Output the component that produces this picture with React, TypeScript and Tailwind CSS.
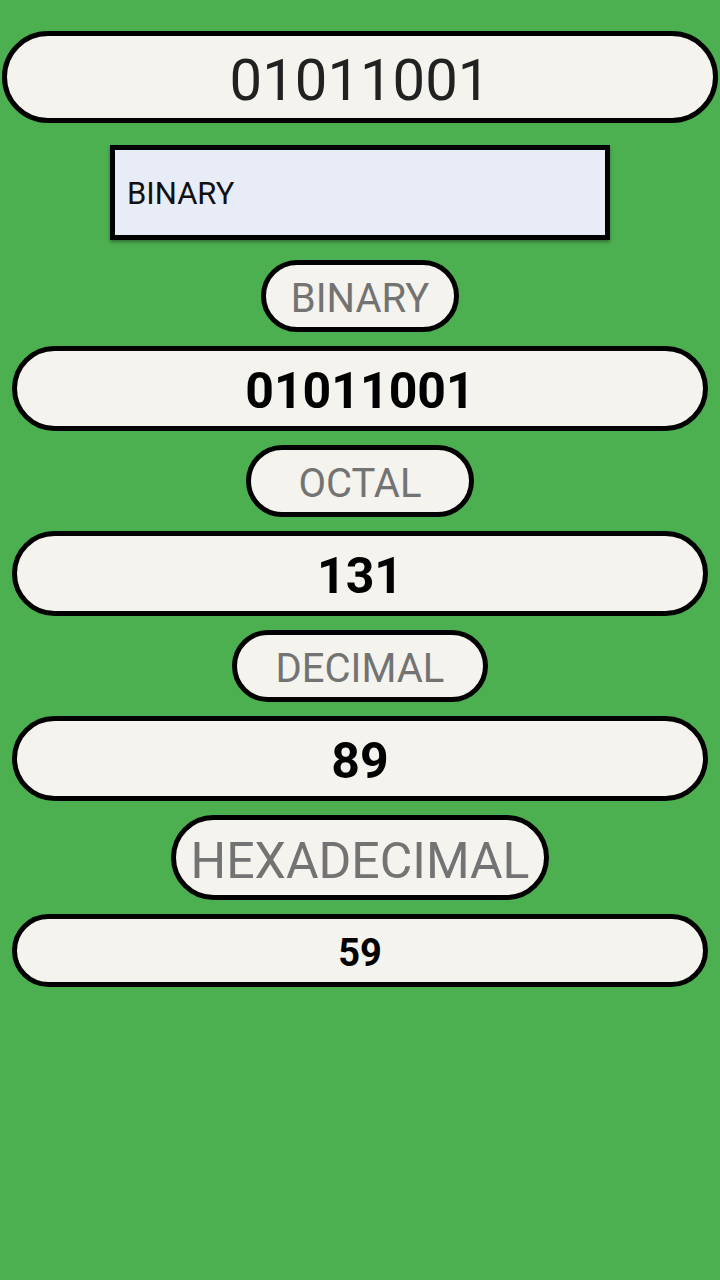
const font = { fontFamily: "Roboto, 'Noto Sans', sans-serif" };

const values = [
  { label: "BINARY", value: "01011001", w: "w-[198px]", h: "h-[72px]", text: "text-[40px]", vh: "h-[85px]", vt: "text-[50px]" },
  { label: "OCTAL", value: "131", w: "w-[228px]", h: "h-[72px]", text: "text-[40px]", vh: "h-[85px]", vt: "text-[50px]" },
  { label: "DECIMAL", value: "89", w: "w-[256px]", h: "h-[72px]", text: "text-[40px]", vh: "h-[85px]", vt: "text-[50px]" },
  { label: "HEXADECIMAL", value: "59", w: "w-[378px]", h: "h-[85px]", text: "text-[50px]", vh: "h-[73px]", vt: "text-[38px]" },
];

const App = () => {
  return (
    <div className="min-h-[1280px] w-[720px] bg-[#4caf50] flex flex-col items-center pt-[31px]" style={font}>
      {/* Input display */}
      <div className="w-[716px] h-[92px] rounded-full border-[5px] border-black bg-[#f4f3ed] flex items-center justify-center pt-[6px]">
        <span className="text-[58px] text-[#212121] leading-none">01011001</span>
      </div>

      {/* Base selector */}
      <div className="mt-[22px] w-[500px] h-[95px] border-[5px] border-black bg-[#e8ecf7] flex items-center pl-[12px] pt-[2px] shadow-[0_2px_3px_rgba(0,0,0,0.35)]">
        <span className="text-[31px] text-[#111] leading-none">BINARY</span>
      </div>

      <div className="mt-[20px] flex flex-col items-center gap-[14px]">
        {values.map((v) => (
          <div key={v.label} className="flex flex-col items-center gap-[14px]">
            <div className={`${v.w} ${v.h} rounded-full border-[5px] border-black bg-[#f4f3ed] flex items-center justify-center pt-[6px]`}>
              <span className={`${v.text} text-[#737373] leading-none`}>{v.label}</span>
            </div>
            <div className={`w-[696px] ${v.vh} rounded-full border-[5px] border-black bg-[#f4f3ed] flex items-center justify-center pt-[5px]`}>
              <span className={`${v.vt} font-bold text-black leading-none`}>{v.value}</span>
            </div>
          </div>
        ))}
      </div>
    </div>
  );
};

export default App;
